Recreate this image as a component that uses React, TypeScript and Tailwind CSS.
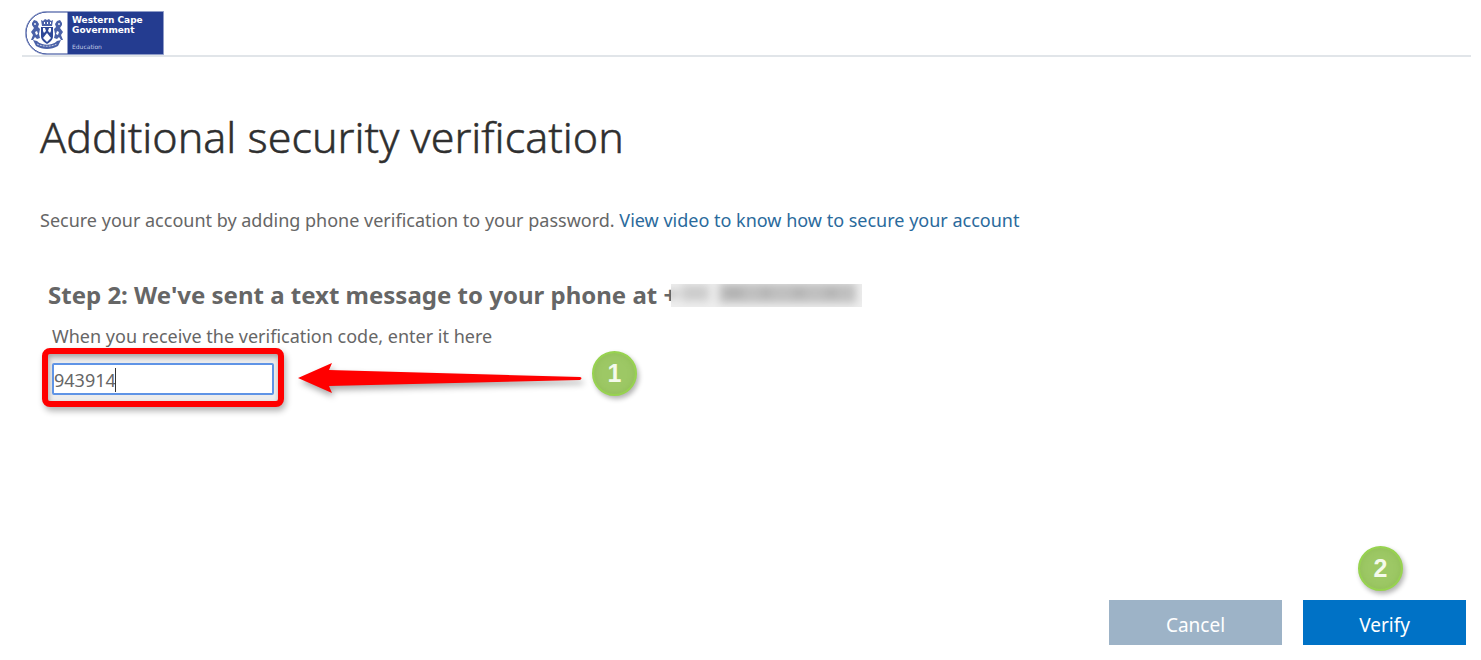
import React, { useState } from 'react';

const Badge = ({ value }: { value: number }) => (
  <span className="flex h-[45px] w-[45px] shrink-0 items-center justify-center rounded-full border-2 border-[#97d34f] bg-[#9dc865] font-['Liberation_Sans'] text-[25px] leading-none font-bold text-[#f4faec] shadow-[2px_3px_5px_rgba(0,0,0,0.3),inset_0_0_6px_rgba(120,170,60,0.35)]">
    {value}
  </span>
);

const Logo = () => (
  <div className="flex h-[44px] w-[139px] overflow-hidden rounded-l-full border border-[#8f9cc8] bg-[#243c90]">
    <svg viewBox="0 0 42 42" className="h-[42px] w-[42px] shrink-0" aria-hidden="true">
      <path d="M42 0H21A21 21 0 0 0 21 42H42Z" fill="#fff" stroke="#243c90" />
      <g fill="#4a61a8">
        {/* crown */}
        <path d="M15 8l2 1 2-2 2 1 2-1 2 2 2-1-1 6H16Z" />
        {/* supporters */}
        <path d="M6 11l2-3 3 1 2 3-1 3 2 2-1 5 1 4-3 1-2-2-2 3H5l2-5-2-3 3-4-2-3Z" />
        <path d="M36 11l-2-3-3 1-2 3 1 3-2 2 1 5-1 4 3 1 2-2 2 3h2l-2-5 2-3-3-4 2-3Z" />
        {/* ribbon */}
        <path d="M7 28l4 1c5 5 15 5 20 0l4-1-3 6c-7 4-15 4-22 0Z" />
      </g>
      {/* shield */}
      <path d="M15 15h12v9c0 4-3 6-6 8-3-2-6-4-6-8Z" fill="#2f4998" />
      <g fill="#fff">
        <path d="M21 21l4 5-4 4-4-4Z" />
        <path d="M17 16h2l1 3-2 2-1-2ZM25 16h-2l-1 3 2 2 1-2Z" />
        <path d="M18 10h1v2h-1ZM21 10h1v2h-1ZM24 10h1v2h-1Z" />
        <circle cx="9" cy="12" r="0.9" />
        <circle cx="33" cy="12" r="0.9" />
        <path d="M9 20l2-1 1 3-2 1ZM33 20l-2-1-1 3 2 1Z" />
      </g>
      <path d="M11 32c6 3 14 3 20 0" fill="none" stroke="#fff" strokeWidth="0.7" strokeDasharray="2 1" />
    </svg>
    <div className="pt-[3px] pl-1 font-['DejaVu_Sans'] text-white">
      <div className="text-[9px] leading-[10px] font-bold">Western Cape</div>
      <div className="text-[9px] leading-[10px] font-bold">Government</div>
      <div className="pt-[7px] text-[6px] leading-[10px] text-[#c3cbe6]">Education</div>
    </div>
  </div>
);

const Arrow = () => (
  <svg viewBox="0 0 284 32" className="h-8 w-[284px] shrink-0 overflow-visible drop-shadow-[2px_4px_3px_rgba(0,0,0,0.35)]" aria-hidden="true">
    <path d="M0 16L34 1L31 8L282 15Q285 16 282 18L31 24L34 31Z" fill="#ff0000" />
  </svg>
);

// the number itself stays hidden, only smudges are drawn
const HiddenNumber = () => (
  <svg viewBox="0 0 191 23" className="-ml-1.5 h-[23px] w-[191px] shrink-0 bg-[#eeeeee]" role="img" aria-label="Hidden phone number">
    <defs>
      <filter id="smudge" x="-10%" y="-50%" width="120%" height="200%">
        <feGaussianBlur stdDeviation="4" />
      </filter>
    </defs>
    <g fill="#c0c0c0" filter="url(#smudge)">
      <rect x="-4" y="6" width="10" height="8" />
      <rect x="10" y="1" width="28" height="16" fill="#cccccc" />
      <rect x="48" y="-1" width="137" height="20" />
      <rect x="54" y="4" width="18" height="10" fill="#b0b0b0" />
      <rect x="90" y="4" width="10" height="10" fill="#b4b4b4" />
      <rect x="122" y="4" width="12" height="10" fill="#b4b4b4" />
      <rect x="154" y="4" width="12" height="10" fill="#b4b4b4" />
    </g>
  </svg>
);

export default function App() {
  const [code, setCode] = useState('943914');

  return (
    <div className="min-h-screen bg-white font-['Noto_Sans',sans-serif] text-[#666666]">
      <header className="mr-2.5 ml-[22px] border-b-2 border-[#e1e5e9] pt-[11px] pl-[3px]">
        <Logo />
      </header>

      <form onSubmit={(e) => e.preventDefault()} className="pr-[15px] pl-10">
        <h1 className="mt-[50px] font-['Noto_Sans',sans-serif] text-[43px] leading-[60px] font-light whitespace-nowrap text-[#2f2f2f] [-webkit-text-stroke:0.5px_#2f2f2f]">
          Additional security verification
        </h1>

        <p className="mt-[41px] text-[18px] leading-6">
          Secure your account by adding phone verification to your password.{' '}
          <a href="#video" className="text-[#2a6a9c]">
            View video to know how to secure your account
          </a>
        </p>

        <div className="mt-[47px] flex items-center pl-2">
          <h2 className="text-[24px] leading-8 font-bold whitespace-nowrap">
            Step 2: We've sent a text message to your phone at +
          </h2>
          <HiddenNumber />
        </div>

        <label htmlFor="code" className="mt-[13px] block pl-3 text-[18px] leading-6">
          When you receive the verification code, enter it here
        </label>

        <div className="flex items-start pl-0.5">
          <div className="rounded-lg border-[6px] border-[#ff0000] bg-[#ececec] px-1 pt-[9px] pb-[6px] shadow-[2px_4px_6px_rgba(0,0,0,0.3),inset_1px_3px_5px_rgba(0,0,0,0.3)]">
            <div className="flex h-8 w-[222px] items-center rounded-xs border-2 border-[#5f94e6] bg-white pt-0.5">
              <input
                id="code"
                type="text"
                value={code}
                onChange={(e) => setCode(e.target.value)}
                className="w-[61px] text-[18px] leading-6 outline-none"
              />
              <span className="h-6 w-px bg-[#333333]" />
            </div>
          </div>
          <div className="ml-3.5 flex h-[59px] items-center">
            <Arrow />
          </div>
          <div className="ml-2.5 pt-[3px]">
            <Badge value={1} />
          </div>
        </div>

        <div className="mt-[139px] flex items-end justify-end gap-[21px]">
          <button
            type="button"
            className="h-[45px] w-[173px] bg-[#9db3c7] pt-1 text-[19px] leading-6 text-white"
          >
            Cancel
          </button>
          <div className="flex flex-col items-center gap-[9px]">
            <div className="pr-2">
              <Badge value={2} />
            </div>
            <button
              type="submit"
              className="h-[45px] w-[163px] bg-[#0072c6] pt-1 text-[19px] leading-6 text-white"
            >
              Verify
            </button>
          </div>
        </div>
      </form>
    </div>
  );
}
